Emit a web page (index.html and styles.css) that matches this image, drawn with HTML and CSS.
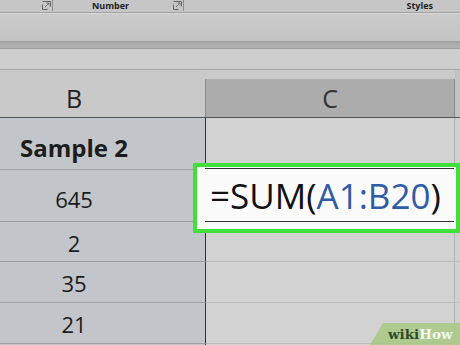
FILE: index.html
```html
<!DOCTYPE html>
<html lang="en">
<head>
    <meta charset="UTF-8">
    <meta name="viewport" content="width=device-width, initial-scale=1.0">
    <title>SUM formula</title>
    <link rel="stylesheet" href="styles.css">
</head>
<body>
    <div class="window">
        <div class="ribbon">
            <span class="launcher launcher-first">
                <svg width="9" height="9" viewBox="0 0 9 9"><path d="M0.5 3.5V8.5H5.5M0.5 0.5H8.5V5.5" fill="none" stroke="#666" stroke-width="1"/><path d="M3 6L7 2M4.5 2H7V4.5" fill="none" stroke="#777" stroke-width="1"/></svg>
            </span>
            <span class="group-label label-number">Number</span>
            <span class="launcher launcher-second">
                <svg width="9" height="9" viewBox="0 0 9 9"><path d="M0.5 3.5V8.5H5.5M0.5 0.5H8.5V5.5" fill="none" stroke="#666" stroke-width="1"/><path d="M3 6L7 2M4.5 2H7V4.5" fill="none" stroke="#777" stroke-width="1"/></svg>
            </span>
            <span class="group-label label-styles">Styles</span>
        </div>
        <div class="ribbon-body"></div>
        <div class="splitter"></div>
        <div class="formula-bar"></div>

        <div class="sheet">
            <div class="col-head head-b">B</div>
            <div class="col-head head-c"><span class="head-c-inner">C</span></div>
            <div class="col-head head-d"></div>

            <div class="cell cell-b row-tall bold">Sample 2</div>
            <div class="cell cell-c"></div>
            <div class="cell cell-d"></div>

            <div class="cell cell-b row-tall">645</div>
            <div class="cell cell-c active">
                <div class="editor">
                    <div class="edit-line">=SUM(<span class="ref">A1:B20</span>)</div>
                </div>
            </div>
            <div class="cell cell-d"></div>

            <div class="cell cell-b">2</div>
            <div class="cell cell-c"></div>
            <div class="cell cell-d"></div>

            <div class="cell cell-b">35</div>
            <div class="cell cell-c"></div>
            <div class="cell cell-d"></div>

            <div class="cell cell-b">21</div>
            <div class="cell cell-c"></div>
            <div class="cell cell-d"></div>

            <div class="cell cell-b tail"></div>
            <div class="cell cell-c tail"></div>
            <div class="cell cell-d tail"></div>
        </div>

        <div class="watermark"><span class="wiki">wiki</span><span class="how">How</span></div>
    </div>
</body>
</html>
```

FILE: styles.css
```css
* {
    margin: 0;
    padding: 0;
    box-sizing: border-box;
}

body {
    width: 460px;
    height: 345px;
    overflow: hidden;
    background: #c8c8c8;
    font-family: 'Open Sans', sans-serif;
}

.window {
    position: relative;
    width: 460px;
    height: 345px;
    overflow: hidden;
}

/* ribbon strip at the top */
.ribbon {
    height: 13px;
    display: flex;
    align-items: flex-start;
    background: #c6c6c6;
    border-bottom: 1px solid #a2a2a2;
}

.launcher {
    display: flex;
    height: 11px;
    padding: 1px 1px 0 0;
    border-right: 1px solid #8e8e8e;
}

.launcher-first {
    margin-left: 42px;
}

.launcher-second {
    margin-left: 44px;
}

.group-label {
    font-family: 'Open Sans', sans-serif;
    font-size: 9px;
    font-weight: bold;
    line-height: 12px;
    color: #1e1e1e;
}

.label-number {
    margin-left: 39px;
}

.label-styles {
    margin-left: auto;
    margin-right: 27px;
}

.ribbon-body {
    height: 28px;
    background: linear-gradient(#cbcbcb, #c3c3c3);
    border-top: 1px solid #d8d8d8;
}

.splitter {
    height: 8px;
    background: linear-gradient(#9c9c9c, #acacac 30%, #b2b2b2);
    border-bottom: 1px solid #a0a0a0;
}

.formula-bar {
    height: 21px;
    background: #cecece;
    border-bottom: 1px solid #a8a8a8;
}

/* worksheet grid */
.sheet {
    display: grid;
    grid-template-columns: 205px 250px 1fr;
    grid-template-rows: 48px 52px 52px 40px 41px 41px 2px;
}

.col-head {
    font-size: 25px;
    line-height: 25px;
    color: #222;
    border-bottom: 1px solid #555;
}

.head-b {
    background: #c9c9c9;
    padding: 16px 57px 0 0;
    text-align: center;
}

.head-c {
    background: #cacaca;
    padding-top: 9px;
}

.head-c-inner {
    display: block;
    height: 100%;
    background: #acacac;
    border-left: 1px solid #8a8a8a;
    border-right: 1px solid #8a8a8a;
    padding-top: 7px;
    text-align: center;
    color: #333;
}

.head-d {
    background: #c2c2c2;
}

.cell {
    font-size: 22px;
    line-height: 22px;
    color: #1c1c1c;
    padding-top: 10px;
}

.cell-b {
    background: #c2c6cb;
    border-bottom: 1px solid #9da1a6;
    padding-right: 57px;
    text-align: center;
}

.row-tall {
    padding-top: 18px;
}

.bold {
    font-weight: bold;
    font-size: 24px;
    line-height: 24px;
}

.cell-c {
    background: #d2d2d2;
    border-left: 1px solid #22229c;
    border-right: 1px solid #b4b4b4;
    border-bottom: 1px solid #bcbcbc;
}

.cell-d {
    background: #d0d0d0;
    border-bottom: 1px solid #bcbcbc;
}

.tail {
    border-bottom: none;
}

/* in-cell editor with green highlight */
.active {
    position: relative;
}

.editor {
    position: absolute;
    left: -13px;
    top: -7px;
    right: -6px;
    bottom: -12px;
    z-index: 2;
    background: #fbfbfb;
    border: 4px solid #3fe03a;
}

.edit-line {
    margin: 1px 2px 0 8px;
    height: 54px;
    border-top: 1px solid #333;
    border-bottom: 1px solid #333;
    padding: 9px 0 0 5px;
    font-size: 35px;
    line-height: 35px;
    color: #111;
    white-space: nowrap;
}

.ref {
    color: #2f5ca6;
}

/* watermark */
.watermark {
    position: absolute;
    right: 0;
    bottom: 0;
    width: 90px;
    height: 22px;
    padding: 4px 0 0 18px;
    background: rgba(168, 201, 132, 0.85);
    clip-path: polygon(13px 0, 100% 0, 100% 100%, 0 100%);
    font-family: 'DejaVu Serif', serif;
    font-weight: bold;
    font-size: 13.5px;
    line-height: 14px;
}

.wiki {
    color: #2e4a2a;
}

.how {
    color: #f4f8ef;
}
```
